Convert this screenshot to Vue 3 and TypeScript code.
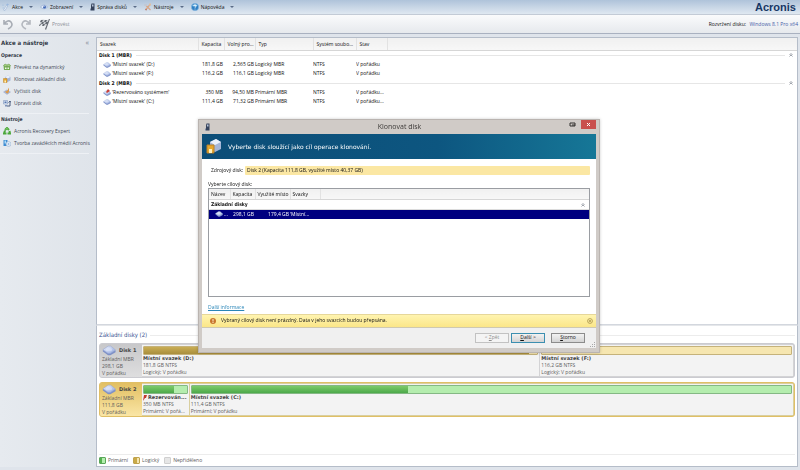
<script setup lang="ts">
interface Volume {
  name: string
  capacity: string
  free: string
  type: string
  fs: string
  state: string
  system?: boolean
}
interface Part {
  name: string
  size: string
  info: string
  share: number
  used: number
  kind: 'primary' | 'logical'
  flag?: boolean
}
interface Disk {
  name: string
  size: string
  selected: boolean
  parts: Part[]
}

const menus = [
  { icon: 'wand', label: 'Akce' },
  { icon: 'eye', label: 'Zobrazení' },
  { icon: 'drive', label: 'Správa disků' },
  { icon: 'tools', label: 'Nástroje' },
  { icon: 'help', label: 'Nápověda' },
]

const sideGroups = [
  {
    title: 'Operace',
    items: [
      { icon: 'dynamic', label: 'Převést na dynamický' },
      { icon: 'clone', label: 'Klonovat základní disk' },
      { icon: 'clean', label: 'Vyčistit disk' },
      { icon: 'edit', label: 'Upravit disk' },
    ],
  },
  {
    title: 'Nástroje',
    items: [
      { icon: 'recovery', label: 'Acronis Recovery Expert' },
      { icon: 'media', label: 'Tvorba zaváděcích médií Acronis' },
    ],
  },
]

const volumeGroups: { title: string; rows: Volume[] }[] = [
  {
    title: 'Disk 1 (MBR)',
    rows: [
      { name: "'Místní svazek' (D:)", capacity: '181,8 GB', free: '2,565 GB', type: 'Logický MBR', fs: 'NTFS', state: 'V pořádku' },
      { name: "'Místní svazek' (F:)", capacity: '116,2 GB', free: '116,1 GB', type: 'Logický MBR', fs: 'NTFS', state: 'V pořádku' },
    ],
  },
  {
    title: 'Disk 2 (MBR)',
    rows: [
      { name: "'Rezervováno systémem'", capacity: '350 MB', free: '94,50 MB', type: 'Primární MBR', fs: 'NTFS', state: 'V pořádku...', system: true },
      { name: "'Místní svazek' (C:)", capacity: '111,4 GB', free: '71,32 GB', type: 'Primární MBR', fs: 'NTFS', state: 'V pořádku...' },
    ],
  },
]

const disks: Disk[] = [
  {
    name: 'Disk 1',
    size: '298,1 GB',
    selected: false,
    parts: [
      { name: 'Místní svazek (D:)', size: '181,8 GB NTFS', info: 'Logický; V pořádku', share: 399, used: 98, kind: 'logical' },
      { name: 'Místní svazek (F:)', size: '116,2 GB NTFS', info: 'Logický; V pořádku', share: 253, used: 0, kind: 'logical' },
    ],
  },
  {
    name: 'Disk 2',
    size: '111,8 GB',
    selected: true,
    parts: [
      { name: 'Rezervován...', size: '350 MB NTFS', info: 'Primární; V pořá...', share: 45, used: 70, kind: 'primary', flag: true },
      { name: 'Místní svazek (C:)', size: '111,4 GB NTFS', info: 'Primární; V pořádku', share: 604, used: 36, kind: 'primary' },
    ],
  },
]

const legend = [
  { kind: 'primary', label: 'Primární' },
  { kind: 'logical', label: 'Logický' },
  { kind: 'none', label: 'Nepřiděleno' },
]
</script>

<template>
  <div class="app">
    <svg class="defs" aria-hidden="true">
      <defs>
        <linearGradient id="diskTop" x1="0" y1="0" x2="1" y2="1">
          <stop offset="0" stop-color="#eef3ff" />
          <stop offset="1" stop-color="#8fa5dc" />
        </linearGradient>
        <symbol id="disk" viewBox="0 0 16 12">
          <path d="M1 5v2l6 4.500h2.500L15.500 8V6z" fill="#7d90c6" />
          <path d="M1 5 7 1h3l5.500 4.500L9.500 9.500H7z" fill="url(#diskTop)" stroke="#93a5d2" stroke-width=".6" />
          <ellipse cx="8" cy="5" rx="3.500" ry="1.800" fill="#f4f7ff" opacity=".4" />
        </symbol>
        <symbol id="wand" viewBox="0 0 16 16">
          <path d="M3 14 9 5l2 1-5 9z" fill="#f4f8fd" stroke="#8ba6ca" />
          <path d="M11 1v5M8 3h6M2 3v3M1 10h3" stroke="#8fb0dc" />
        </symbol>
        <symbol id="eye" viewBox="0 0 16 16">
          <path d="M1 8q7-8 14 0-7 7-14 0z" fill="#e4edfb" stroke="#7d97c7" />
          <circle cx="9" cy="8" r="3" fill="#3f66b4" />
          <circle cx="8" cy="7" r="1" fill="#fff" />
        </symbol>
        <symbol id="drive" viewBox="0 0 10 16">
          <path d="M3 1h6v14H2V5z" fill="#35435c" />
          <path d="M4 3h3v4H4z" fill="#b9c6dc" />
          <path d="M0 11h2v4H0z" fill="#7c8aa3" />
        </symbol>
        <symbol id="tools" viewBox="0 0 16 16">
          <path d="m2 3 11 11M4 13l8-10" stroke="#d8a88b" stroke-width="2.500" />
          <path d="M1 2h5v4H1z" fill="#c2c8d4" />
          <path d="M10 1h4v4h-4z" fill="#e0bd9e" />
          <path d="m2 13 2-2 2 3-2 1z" fill="#b8735f" />
        </symbol>
        <symbol id="help" viewBox="0 0 16 16">
          <circle cx="8" cy="8" r="7.500" fill="#2f80c4" stroke="#a9cbe8" />
          <path d="M2 6q5-6 11-1-5 3-11 1z" fill="#a9d8f5" />
          <path d="M6 6q0-2 2-2t2 2-2 3v1m0 1v2" fill="none" stroke="#fff" stroke-width="1.500" />
        </symbol>
        <symbol id="dynamic" viewBox="0 0 16 16">
          <path d="M1 5h14l-1 9H2z" fill="#77ad55" />
          <path d="M1 5q3-5 7-1 4-4 7 1-3 3-7 1-4 2-7-1z" fill="#add58c" stroke="#5d8f45" />
          <path d="M4 9h3v3H4zM9 9h3v3H9z" fill="#f1f8e9" />
        </symbol>
        <symbol id="clone" viewBox="0 0 16 16">
          <path d="m4 4 6-3 5 3v7l-6 3-5-2z" fill="#a5b6d7" />
          <path d="m4 4 6-3 5 3-6 3z" fill="#eaf1fc" />
          <path d="M1 7h7v8H1z" fill="#e6a82e" stroke="#b8802a" />
          <path d="M3 11h3v4H3z" fill="#fff1c1" />
        </symbol>
        <symbol id="clean" viewBox="0 0 16 16">
          <path d="m1 10 6-4 8 4-7 5z" fill="#a8b9df" stroke="#8091bb" stroke-width=".6" />
          <path d="m12 1-4 7-4 1q2 4 6 4l2-4z" fill="#dd9b4b" />
        </symbol>
        <symbol id="edit" viewBox="0 0 16 16">
          <path d="M1 3h8v7H1z" fill="#dbe6f6" stroke="#7189b3" />
          <path d="M3 5h4v3H3z" fill="#5777ae" />
          <path d="M8 14h6V5M11 7l3-3 2 3" fill="none" stroke="#4d5e80" stroke-width="2" />
          <path d="M4 12h4v3H4z" fill="#7d92ba" />
        </symbol>
        <symbol id="recovery" viewBox="0 0 16 16">
          <path d="m4 6 4-4 4 4M13 8l1 5H9M7 13l-5-0 2-6" fill="none" stroke="#4ba83a" stroke-width="4" />
          <path d="m5 5 3-3 2 3" fill="none" stroke="#9ddb7c" />
        </symbol>
        <symbol id="media" viewBox="0 0 16 16">
          <path d="M1 2h8v12H1z" fill="#3e8cd2" />
          <path d="M3 3h3v6H3z" fill="#a9dbfb" />
          <circle cx="11" cy="10" r="5" fill="#dbe8f7" stroke="#95aecb" />
          <circle cx="11" cy="10" r="1.500" fill="#7da6d3" />
        </symbol>
        <symbol id="up" viewBox="0 0 8 8">
          <path d="m1 4 3-3 3 3M1 7l3-3 3 3" fill="none" stroke="#858b95" stroke-width="1.600" />
        </symbol>
      </defs>
    </svg>

    <header>
      <nav class="menubar" aria-label="Menu">
        <button v-for="m in menus" :key="m.label" class="menu" type="button">
          <svg :class="['i8', m.icon]"><use :href="'#' + m.icon" /></svg>
          <span>{{ m.label }}</span>
          <svg class="caret" viewBox="0 0 4 4"><path d="M0 1h4L2 3z" fill="#5b6c87" /></svg>
        </button>
        <strong class="brand">Acronis</strong>
      </nav>
      <div class="toolbar">
        <button type="button" class="tool" aria-label="Zpět">
          <svg class="i12" viewBox="0 0 12 12"><path d="M2 2v4h4M2 6q4-5 7-2 3 4-3 7" fill="none" stroke="#a8adb5" stroke-width="1.600" /></svg>
        </button>
        <button type="button" class="tool" aria-label="Znovu">
          <svg class="i12" viewBox="0 0 12 12"><path d="M10 2v4H6M10 6Q6 1 3 4q-3 4 3 7" fill="none" stroke="#b4b8bf" stroke-width="1.600" /></svg>
        </button>
        <button type="button" class="tool run">
          <svg class="i12" viewBox="0 0 12 12">
            <path d="M3 2q2-1 4 0t4-1L9 7Q7 8 5 7T1 8z" fill="#c9ccd1" />
            <path d="M3 2h2L4 4H2zM7 2h2L8 4H6zM4 4h2L5 6H3zM8 4h2L9 6H7zM2 6h1L2 8H1zM5 6h2L6 8H4zM11 1l1 0-4 11-1-1z" fill="#666b73" />
          </svg>
          <span>Provést</span>
        </button>
        <p class="layout">Rozvržení disku: <a href="#">Windows 8.1 Pro x64</a></p>
      </div>
    </header>

    <div class="work">
      <aside>
        <div class="side-head"><h2>Akce a nástroje</h2><button type="button" class="fold" aria-label="Sbalit">«</button></div>
        <section v-for="g in sideGroups" :key="g.title">
          <h3>{{ g.title }}</h3>
          <a v-for="i in g.items" :key="i.label" href="#" class="task">
            <svg class="i8"><use :href="'#' + i.icon" /></svg>{{ i.label }}
          </a>
        </section>
      </aside>

      <main>
        <div class="volumes">
          <table class="grid">
            <colgroup><col class="c-name" /><col class="c-cap" /><col class="c-free" /><col class="c-type" /><col class="c-fs" /><col class="c-state" /><col /></colgroup>
            <thead>
              <tr><th>Svazek</th><th>Kapacita</th><th>Volný pro...</th><th>Typ</th><th>Systém soubo...</th><th>Stav</th><th></th></tr>
            </thead>
            <tbody v-for="g in volumeGroups" :key="g.title">
              <tr class="group">
                <th colspan="7"><div class="group-line"><span>{{ g.title }}</span><i></i><svg class="i4"><use href="#up" /></svg></div></th>
              </tr>
              <tr v-for="v in g.rows" :key="v.name">
                <td>
                  <div class="vol">
                    <svg class="i8"><use href="#disk" /><path v-if="v.system" d="M5 0 3 3l1 1 3-2z" fill="#c9403a" /></svg>{{ v.name }}
                  </div>
                </td>
                <td class="num">{{ v.capacity }}</td><td class="num">{{ v.free }}</td>
                <td>{{ v.type }}</td><td>{{ v.fs }}</td><td>{{ v.state }}</td><td></td>
              </tr>
            </tbody>
          </table>
        </div>

        <div class="disks">
          <h2 class="rule"><span>Základní disky (2)</span></h2>
          <article v-for="d in disks" :key="d.name" :class="['disk', { selected: d.selected }]">
            <div class="disk-info">
              <div class="disk-name"><svg class="i14"><use href="#disk" /></svg><b>{{ d.name }}</b></div>
              <p>Základní MBR</p><p>{{ d.size }}</p><p>V pořádku</p>
            </div>
            <div class="parts">
              <div v-for="p in d.parts" :key="p.name" class="part" :style="{ flexGrow: p.share }">
                <div :class="['bar', p.kind]"><div :style="{ width: p.used + '%' }"></div></div>
                <p class="pname"><svg v-if="p.flag" class="flag" viewBox="0 0 4 6"><path d="M1 0h3L3 3H2L0 6z" fill="#c23a32" /></svg><b>{{ p.name }}</b></p>
                <p>{{ p.size }}</p><p>{{ p.info }}</p>
              </div>
            </div>
          </article>
          <footer class="legend">
            <span v-for="l in legend" :key="l.kind"><i :class="l.kind"></i>{{ l.label }}</span>
          </footer>
        </div>
      </main>
    </div>

    <div class="overlay">
      <div class="dialog" role="dialog" aria-labelledby="dlgTitle">
        <div class="title">
          <svg class="i8 drive"><use href="#drive" /></svg>
          <h1 id="dlgTitle">Klonovat disk</h1>
          <svg class="pop" viewBox="0 0 7 6"><path d="M1 1h5v3H1zM3 3h3" fill="none" stroke="#33302e" /></svg>
          <button type="button" class="close" aria-label="Zavřít"><svg viewBox="0 0 5 5"><path d="m1 1 3 3M4 1 1 4" stroke="#fff" /></svg></button>
        </div>
        <div class="sheet">
          <div class="banner"><svg class="i16"><use href="#clone" /></svg><h2>Vyberte disk sloužící jako cíl operace klonování.</h2></div>
          <div class="body">
            <p class="source"><span>Zdrojový disk:</span><output>Disk 2 (Kapacita 111,8 GB, využité místo 40,37 GB)</output></p>
            <p class="prompt">Vyberte cílový disk:</p>
            <div class="list">
              <table class="grid targets">
                <colgroup><col class="t-name" /><col class="t-cap" /><col class="t-used" /><col class="t-vol" /><col /></colgroup>
                <thead><tr><th>Název</th><th>Kapacita</th><th>Využité místo</th><th>Svazky</th><th></th></tr></thead>
                <tbody>
                  <tr class="group"><th colspan="5"><div class="group-line"><span>Základní disky</span><i class="blank"></i><svg class="i4"><use href="#up" /></svg></div></th></tr>
                  <tr class="picked">
                    <td><div class="vol"><svg class="i8"><use href="#disk" /></svg>...</div></td>
                    <td class="num">298,1 GB</td><td class="num">179,4 GB</td><td>'Místní...</td><td></td>
                  </tr>
                </tbody>
              </table>
            </div>
            <a class="more" href="#">Další informace</a>
          </div>
          <div class="warn">
            <svg class="i6" viewBox="0 0 6 6"><circle cx="3" cy="3" r="3" fill="#c8762c" /><path d="M3 1v2.500M3 4v1" stroke="#fff3d0" /></svg>
            <span>Vybraný cílový disk není prázdný. Data v jeho svazcích budou přepsána.</span>
            <svg class="i6" viewBox="0 0 6 6"><circle cx="3" cy="3" r="2.400" fill="none" stroke="#a8924a" stroke-width=".8" /><path d="m2 2 2 2M4 2 2 4" stroke="#a8924a" stroke-width=".7" /></svg>
          </div>
          <div class="actions">
            <div class="pair">
              <button type="button" disabled>&lt; <u>Z</u>pět</button>
              <button type="button" class="default"><u>D</u>alší &gt;</button>
            </div>
            <button type="button"><u>S</u>torno</button>
            <svg class="grip" viewBox="0 0 6 6"><path d="M4 0h1v1H4zM2 2h1v1H2zM4 2h1v1H4zM0 4h1v1H0zM2 4h1v1H2zM4 4h1v1H4z" fill="#a9a9a9" /></svg>
          </div>
        </div>
      </div>
    </div>
  </div>
</template>

<style>
body { background: #dfe4eb; }
</style>

<style scoped>
.app {
  min-height: 100vh;
  display: flex;
  flex-direction: column;
  box-sizing: border-box;
  font: 5px/7px "Open Sans", "Noto Sans", sans-serif;
  color: #111;
  white-space: nowrap;
}
.app *, .app *::before, .app *::after { box-sizing: border-box; }
h1, h2, h3, p { margin: 0; font-size: inherit; }
h2, h3, .group { font-family: "DejaVu Sans Condensed", "DejaVu Sans", sans-serif; }
b, .banner h2 { font-family: "DejaVu Sans", sans-serif; }
button { font: inherit; color: inherit; padding: 0; margin: 0; border: 0; background: none; }
a { text-decoration: none; color: inherit; }
svg { flex: none; display: block; }
.defs { width: 0; height: 0; position: absolute; }
.i4 { width: 4px; height: 4px; }
.i6 { width: 6px; height: 6px; }
.i8 { width: 8px; height: 8px; }
.i8.drive { width: 5px; }
.i12 { width: 12px; height: 12px; }
.i14 { width: 14px; height: 11px; }
.i16 { width: 16px; height: 16px; }

.menubar {
  display: flex;
  align-items: center;
  gap: 7px;
  height: 14px;
  padding: 0 4px 0 2px;
  background: linear-gradient(#afc3da, #dfe8f1);
}
.menu { display: flex; align-items: center; gap: 2px; }
.caret { width: 4px; height: 4px; margin-left: 4px; }
.brand { margin-left: auto; font: bold 11px/12px "Liberation Sans", Arial, sans-serif; color: #173765; }
.toolbar {
  display: flex;
  align-items: center;
  gap: 6px;
  height: 20px;
  padding: 0 2px;
  border-top: 1px solid #c3cbd6;
  border-bottom: 1px solid #a9b1c0;
  background: linear-gradient(#fafbfc, #e6e9ed);
}
.run { display: flex; align-items: center; gap: 2px; color: #8b9098; }
.layout { margin-left: auto; }
.layout a { color: #4560a8; margin-left: 2px; }

.work { flex: 1; display: flex; padding: 3px 2px 3px 0; }
aside { flex: none; width: 96px; padding-right: 7px; background: linear-gradient(90deg, #e6eaef, #dfe4ea); color: #434a57; }
.side-head { display: flex; justify-content: space-between; align-items: center; height: 10px; margin-bottom: 3px; padding-left: 1px; }
.side-head h2 { font-size: 6px; color: #343b48; }
.fold { font-size: 7px; color: #7c8593; }
aside section { padding: 2px 0 4px; border-bottom: 1px solid #eef1f5; }
aside h3 { padding-left: 1px; color: #343b48; margin-bottom: 2px; }
.task { display: flex; align-items: center; gap: 3px; height: 12px; padding-left: 3px; }

main { flex: 1; min-width: 0; display: flex; flex-direction: column; }
.volumes { flex: 1; background: #fff; border: 1px solid #b5bdc9; border-bottom-color: #d3d7de; }
.grid { width: 100%; table-layout: fixed; border-collapse: collapse; }
.grid th, .grid td { padding: 0; text-align: left; font-weight: normal; overflow: hidden; height: 9px; }
.grid td.num { text-align: right; padding-right: 1px; }
.grid thead th {
  height: 12px;
  padding: 1px 0 0 3px;
  background: linear-gradient(#f0f0f0, #f7f7f7);
  border-bottom: 1px solid #d6d6d6;
  border-right: 1px solid #e2e2e2;
}
.grid thead th:last-child { border-right: 0; }
.grid .group th { height: 10px; font-weight: bold; color: #111; }
.c-name { width: 101px; }
.c-cap { width: 26px; }
.c-free { width: 31px; }
.c-type { width: 58px; }
.c-fs { width: 43px; }
.c-state { width: 31px; }
.group-line { display: flex; align-items: center; gap: 4px; padding: 0 4px 0 2px; }
.group-line i { flex: 1; border-top: 1px solid #e6e6e6; }
.group-line .blank { border: 0; }
.vol { display: flex; align-items: center; gap: 1px; padding-left: 6px; }

.disks {
  display: flex;
  flex-direction: column;
  gap: 4px;
  height: 142px;
  padding: 5px 2px 0;
  background: #fff;
  border: 1px solid #b5bdc9;
  border-top: 1px solid #e5e7ea;
}
.rule { display: flex; align-items: center; gap: 3px; font-size: 6px; font-weight: normal; line-height: 8px; color: #34508f; }
.rule::after { content: ""; flex: 1; border-top: 1px solid #ececec; }
.disk { display: flex; height: 35px; border: 1px solid #cbcbd0; border-radius: 3px; background: #d3d3d5; color: #5c5c5c; }
.disk-info { flex: none; width: 42px; padding-left: 2px; background: linear-gradient(#c8c8ca, #dededf); border-radius: 2px 0 0 2px; }
.disk-name { display: flex; align-items: center; gap: 3px; height: 12px; }
.disk b { color: #444; }
.parts { flex: 1; min-width: 0; display: flex; gap: 1px; padding: 1px 1px 1px 0; }
.part { flex: 1 1 0; min-width: 0; overflow: hidden; padding: 1px; background: #f3f3f3; }
.bar { height: 9px; border: 1px solid #c5b27a; border-radius: 1px; background: #f6e6b0; }
.bar div { height: 100%; background: linear-gradient(#c9ad55, #a98e3c); }
.bar.primary { border-color: #84b884; background: #b4edae; }
.bar.primary div { background: linear-gradient(#7ccb6a, #4ca94a); }
.pname { display: flex; align-items: center; gap: 1px; }
.flag { width: 4px; height: 6px; }
.disk.selected { border-color: #e0bf66; background: #d9cf9f; }
.selected .disk-info { background: linear-gradient(#e2bf62, #fae6a6); }
.legend {
  display: flex;
  align-items: center;
  gap: 5px;
  height: 12px;
  margin-top: auto;
  border-top: 1px solid #ececec;
  color: #5c5c5c;
}
.legend span { display: flex; align-items: center; gap: 2px; }
.legend i { width: 7px; height: 7px; border: 1px solid #5aa75a; border-radius: 1px; background: linear-gradient(90deg, #55b14f 50%, #b4edae 50%); }
.legend .logical { border-color: #c0a34d; background: linear-gradient(90deg, #c9a947 50%, #f6e6b0 50%); }
.legend .none { border-color: #cfcfcf; background: #e6e6e6; }

.overlay { position: fixed; inset: 0; display: flex; align-items: center; justify-content: center; padding: 1px 2px 0 0; }
.dialog { width: 402px; padding: 0 3px 4px; background: #d0cbc7; border: 1px solid #bab4b0; box-shadow: 0 0 3px #0003; }
.title { display: flex; align-items: flex-start; height: 14px; padding-left: 3px; }
.title > svg.drive { margin-top: 3px; }
.title h1 { flex: 1; padding-left: 20px; font: 7px/14px "Open Sans", "Noto Sans", sans-serif; text-align: center; color: #3d3a38; }
.pop { width: 7px; height: 6px; margin: 2px 5px 0 0; }
.close { display: grid; place-items: center; width: 15px; height: 9px; background: #c9504e; }
.close svg { width: 5px; height: 5px; }
.sheet { background: #fff; }
.banner { display: flex; align-items: center; gap: 6px; height: 25px; padding-left: 4px; background: linear-gradient(90deg, #0c4d77, #0d5680 60%, #167797); color: #fff; }
.banner h2 { font-size: 6px; font-weight: normal; line-height: 9px; }
.body { display: flex; flex-direction: column; height: 155px; padding: 7px 6px 3px; }
.source { display: flex; align-items: center; padding-left: 3px; }
.source span { width: 34px; }
.source output { flex: 1; padding: 1px 2px; line-height: 7px; background: #fbe7a3; border-radius: 1px; }
.prompt { margin-top: 5px; line-height: 8px; }
.list { flex: 1; border: 1px solid #9a9da2; }
.targets thead th { height: 11px; padding-left: 2px; }
.targets .group th { border-bottom: 1px solid #dcdcdc; }
.t-name { width: 21px; }
.t-cap { width: 25px; }
.t-used { width: 35px; }
.t-vol { width: 30px; }
.picked { background: #000080; color: #fff; }
.more { align-self: flex-start; margin: 7px 0 0; color: #2a86b8; text-decoration: underline; }
.warn {
  display: flex;
  align-items: center;
  gap: 5px;
  height: 14px;
  padding: 0 3px 0 8px;
  background: linear-gradient(#fff4b0, #fbe688);
  border-top: 1px solid #e6d79a;
  border-bottom: 1px solid #cfc9b0;
}
.warn span { flex: 1; }
.actions { position: relative; display: flex; align-items: center; justify-content: flex-end; gap: 6px; height: 20px; padding-right: 11px; background: #f0f0f0; }
.pair { display: flex; gap: 2px; }
.actions button { width: 34px; height: 10px; line-height: 7px; border: 1px solid #8c8c8c; background: linear-gradient(#f2f2f2, #d4d4d4); color: #111; }
.actions button:disabled { border-color: #c2c2c2; background: #f4f4f4; color: #8d8d8d; }
.actions button.default { border-color: #3c8fb0; }
.grip { position: absolute; right: 0; bottom: 0; width: 6px; height: 6px; }
</style>
